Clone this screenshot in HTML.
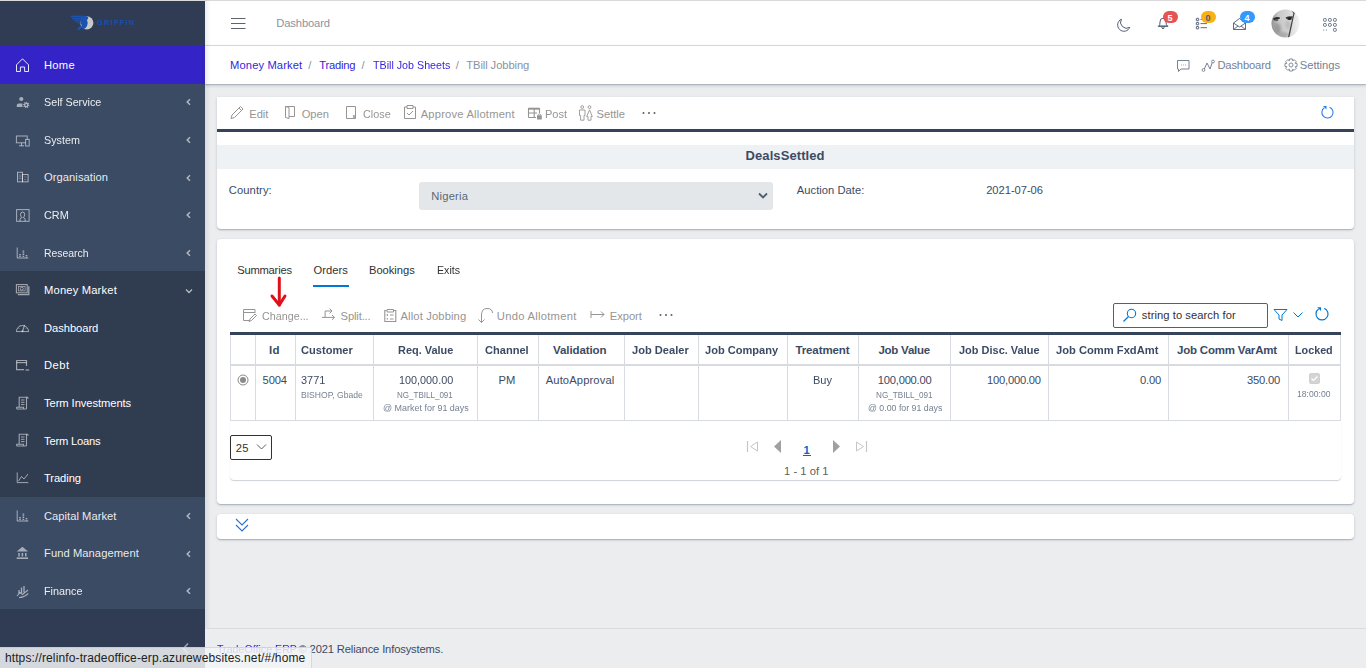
<!DOCTYPE html><html><head><meta charset="utf-8"><style>
html,body{margin:0;padding:0;width:1366px;height:668px;overflow:hidden;background:#ebedef;font-family:"Liberation Sans",sans-serif;position:relative}
.t{position:absolute;white-space:pre;line-height:1}
</style></head><body>
<div style="position:absolute;left:0px;top:0px;width:205px;height:668px;background:#3c4b64"></div>
<div style="position:absolute;left:0px;top:0px;width:205px;height:46px;background:#303c54"></div>
<div style="position:absolute;left:0px;top:46px;width:205px;height:37.6px;background:#3423c6"></div>
<div style="position:absolute;left:0px;top:270.8px;width:205px;height:226.0px;background:#303c50"></div>
<div style="position:absolute;left:0px;top:609px;width:205px;height:59px;background:#303c54"></div>
<svg style="position:absolute;left:68px;top:14px;" width="70" height="18" viewBox="0 0 70 18" fill="none">
<circle cx="18.8" cy="8.8" r="6.6" fill="#c9c9c9"/>
<path d="M2.2 1.8 H15 V3.2 H3.2 Z M4 4 H15 V5.4 H5 Z M6 6.2 H14.5 V7.6 H7 Z M8.5 8.4 H14 V9.6 H9.5 Z" fill="#1d53b0"/>
<path d="M13 2.5 Q16 1.5 19 2.2 Q21 3.2 20 5 Q18.5 5.2 19.2 7 Q20.5 9 19 12 Q17.5 15 15 15.5 Q13 14 13.5 11 Q12 8 13 2.5 Z" fill="#1d53b0"/>
<path d="M9 15.8 Q10 13 12.5 12 L14 13.5 Q12 15 11.5 16 Z" fill="#1d53b0"/>
<text x="29" y="11.4" font-family="Liberation Sans" font-weight="700" font-size="7.4" letter-spacing="1.25" fill="#1a4fa8">GRIFFIN</text>
</svg>
<svg style="position:absolute;left:185px;top:98px;" width="7" height="8" viewBox="0 0 7 8" fill="none"><path d="M5 1.2 L2.2 4 L5 6.8" stroke="rgba(255,255,255,.6)" stroke-width="1.5"/></svg>
<svg style="position:absolute;left:185px;top:136px;" width="7" height="8" viewBox="0 0 7 8" fill="none"><path d="M5 1.2 L2.2 4 L5 6.8" stroke="rgba(255,255,255,.6)" stroke-width="1.5"/></svg>
<svg style="position:absolute;left:185px;top:174px;" width="7" height="8" viewBox="0 0 7 8" fill="none"><path d="M5 1.2 L2.2 4 L5 6.8" stroke="rgba(255,255,255,.6)" stroke-width="1.5"/></svg>
<svg style="position:absolute;left:185px;top:211px;" width="7" height="8" viewBox="0 0 7 8" fill="none"><path d="M5 1.2 L2.2 4 L5 6.8" stroke="rgba(255,255,255,.6)" stroke-width="1.5"/></svg>
<svg style="position:absolute;left:185px;top:249px;" width="7" height="8" viewBox="0 0 7 8" fill="none"><path d="M5 1.2 L2.2 4 L5 6.8" stroke="rgba(255,255,255,.6)" stroke-width="1.5"/></svg>
<svg style="position:absolute;left:185px;top:288px;" width="8" height="6" viewBox="0 0 8 6" fill="none"><path d="M1 1.5 L4 4.5 L7 1.5" stroke="rgba(255,255,255,.65)" stroke-width="1.3"/></svg>
<svg style="position:absolute;left:185px;top:512px;" width="7" height="8" viewBox="0 0 7 8" fill="none"><path d="M5 1.2 L2.2 4 L5 6.8" stroke="rgba(255,255,255,.6)" stroke-width="1.5"/></svg>
<svg style="position:absolute;left:185px;top:550px;" width="7" height="8" viewBox="0 0 7 8" fill="none"><path d="M5 1.2 L2.2 4 L5 6.8" stroke="rgba(255,255,255,.6)" stroke-width="1.5"/></svg>
<svg style="position:absolute;left:185px;top:587px;" width="7" height="8" viewBox="0 0 7 8" fill="none"><path d="M5 1.2 L2.2 4 L5 6.8" stroke="rgba(255,255,255,.6)" stroke-width="1.5"/></svg>
<svg style="position:absolute;left:15px;top:57px;" width="15" height="16" viewBox="0 0 15 16" fill="none"><path d="M1.5 7.8 L7.5 1.8 L13.5 7.8 V14.5 H9.6 V10 H5.4 V14.5 H1.5 Z" stroke="#fff" stroke-width="0.9" stroke-linejoin="round"/></svg>
<svg style="position:absolute;left:15px;top:95px;" width="15" height="15" viewBox="0 0 15 15" fill="none"><circle cx="6.3" cy="4" r="2.1" fill="rgba(255,255,255,.55)"/><path d="M1.8 12 V10 Q1.8 8.5 3.5 8.5 H7.4 V12 Z" fill="rgba(255,255,255,.55)"/><circle cx="11.2" cy="10" r="1.6" stroke="rgba(255,255,255,.55)" stroke-width="1.4"/><circle cx="11.2" cy="10" r="2.6" stroke="rgba(255,255,255,.55)" stroke-width="1.1" stroke-dasharray="1.1 0.9"/></svg>
<svg style="position:absolute;left:15px;top:132px;" width="15" height="15" viewBox="0 0 15 15" fill="none"><rect x="1.4" y="4" width="10.8" height="6.8" stroke="rgba(255,255,255,.55)" stroke-width="1"/><path d="M4 13.8 H9 M6.5 11 V13.8" stroke="rgba(255,255,255,.55)" stroke-width="1"/><rect x="10.6" y="7.4" width="3.6" height="6.6" fill="#3c4b64" stroke="rgba(255,255,255,.55)" stroke-width="1"/></svg>
<svg style="position:absolute;left:15px;top:170px;" width="15" height="15" viewBox="0 0 15 15" fill="none"><rect x="2.5" y="2.3" width="5" height="9.5" stroke="rgba(255,255,255,.55)" stroke-width="1"/><rect x="7.5" y="4.5" width="5.6" height="7.3" stroke="rgba(255,255,255,.55)" stroke-width="1"/><path d="M4.2 4.5 V10 M5.8 4.5 V10 M9.5 7 H11.5 M9.5 9.5 H11.5" stroke="rgba(255,255,255,.55)" stroke-width="0.8" stroke-dasharray="1 0.8"/></svg>
<svg style="position:absolute;left:15px;top:208px;" width="15" height="15" viewBox="0 0 15 15" fill="none"><rect x="1.6" y="1.6" width="12.5" height="11.7" stroke="rgba(255,255,255,.55)" stroke-width="1"/><path d="M5 13.3 V11.8 Q5 10 7 9.5 Q5.5 8.5 5.5 6.5 Q5.5 4 7.6 4 Q9.7 4 9.7 6.5 Q9.7 8.5 8.2 9.5 Q10.2 10 10.2 11.8 V13.3" stroke="rgba(255,255,255,.55)" stroke-width="1"/></svg>
<svg style="position:absolute;left:15px;top:245px;" width="15" height="15" viewBox="0 0 15 15" fill="none"><path d="M2.2 2.5 V13 H13.3" stroke="rgba(255,255,255,.55)" stroke-width="1"/><path d="M5 9 V12.5 M8.4 5.5 V12.5 M11.5 10 V12.5" stroke="rgba(255,255,255,.55)" stroke-width="1.6" stroke-dasharray="1.2 0.6"/></svg>
<svg style="position:absolute;left:15px;top:283px;" width="15" height="15" viewBox="0 0 15 15" fill="none"><rect x="1.4" y="1.6" width="10.8" height="8.2" stroke="rgba(255,255,255,.55)" stroke-width="1.1"/><rect x="3.5" y="3.5" width="6.6" height="4.4" stroke="rgba(255,255,255,.55)" stroke-width="0.8"/><circle cx="6.8" cy="5.7" r="1.5" stroke="rgba(255,255,255,.55)" stroke-width="0.9"/><path d="M2.8 11.6 H13.8 V3.2" stroke="rgba(255,255,255,.55)" stroke-width="1.3"/></svg>
<svg style="position:absolute;left:15px;top:320px;" width="15" height="15" viewBox="0 0 15 15" fill="none"><path d="M1.4 11.6 A6.1 6.1 0 1 1 13.6 11.6 Z" stroke="rgba(255,255,255,.55)" stroke-width="1"/><path d="M7.5 11.2 L9.6 5" stroke="rgba(255,255,255,.55)" stroke-width="1.1"/><circle cx="7.5" cy="11.2" r="1" fill="rgba(255,255,255,.55)"/><path d="M3.6 8.5 H4.4 M5 5.5 L5.5 6 M10.6 8.5 H11.4" stroke="rgba(255,255,255,.55)" stroke-width="0.8"/></svg>
<svg style="position:absolute;left:15px;top:358px;" width="15" height="15" viewBox="0 0 15 15" fill="none"><path d="M11.5 8 V2.8 Q11.5 2.5 11 2.5 H1.8 Q1.6 2.5 1.6 2.8 V11.6 H9" stroke="rgba(255,255,255,.55)" stroke-width="1.2"/><path d="M1.6 4.6 H11.5" stroke="rgba(255,255,255,.55)" stroke-width="1.2"/><path d="M10.5 12 H14.2" stroke="rgba(255,255,255,.55)" stroke-width="1.2"/></svg>
<svg style="position:absolute;left:15px;top:396px;" width="15" height="15" viewBox="0 0 15 15" fill="none"><path d="M4.2 11.2 V1.2 H11.5 V12.2 Q11.5 13 10.6 13 H2 Q1.7 13 1.7 12 V11.2 H8.5 V13" stroke="rgba(255,255,255,.55)" stroke-width="1.1"/><path d="M6 4 H9.5 M6 6.3 H9.5 M6 8.6 H9.5" stroke="rgba(255,255,255,.55)" stroke-width="1"/><path d="M11.5 1.2 H13 V3" stroke="rgba(255,255,255,.55)" stroke-width="0.9"/></svg>
<svg style="position:absolute;left:15px;top:433px;" width="15" height="15" viewBox="0 0 15 15" fill="none"><path d="M4.2 11.2 V1.2 H11.5 V12.2 Q11.5 13 10.6 13 H2 Q1.7 13 1.7 12 V11.2 H8.5 V13" stroke="rgba(255,255,255,.55)" stroke-width="1.1"/><path d="M6 4 H9.5 M6 6.3 H9.5 M6 8.6 H9.5" stroke="rgba(255,255,255,.55)" stroke-width="1"/><path d="M11.5 1.2 H13 V3" stroke="rgba(255,255,255,.55)" stroke-width="0.9"/></svg>
<svg style="position:absolute;left:15px;top:471px;" width="15" height="15" viewBox="0 0 15 15" fill="none"><path d="M2.2 1.5 V11.6 H13.3" stroke="rgba(255,255,255,.55)" stroke-width="1"/><path d="M3.5 10 L6.5 5.5 L9 8 L13 3" stroke="rgba(255,255,255,.55)" stroke-width="1"/></svg>
<svg style="position:absolute;left:15px;top:508px;" width="15" height="15" viewBox="0 0 15 15" fill="none"><path d="M2.2 2.5 V13 H13.3" stroke="rgba(255,255,255,.55)" stroke-width="1"/><path d="M5 9 V12.5 M8.4 5.5 V12.5 M11.5 10 V12.5" stroke="rgba(255,255,255,.55)" stroke-width="1.6" stroke-dasharray="1.2 0.6"/></svg>
<svg style="position:absolute;left:15px;top:546px;" width="15" height="15" viewBox="0 0 15 15" fill="none"><path d="M1.7 5.6 L7.4 0.8 L13.1 5.6 Z" fill="rgba(255,255,255,.55)"/><path d="M4 7 V10.4 M7.4 7 V10.4 M10.8 7 V10.4" stroke="rgba(255,255,255,.55)" stroke-width="1.5"/><path d="M1.7 12.2 H13.1" stroke="rgba(255,255,255,.55)" stroke-width="1.6"/></svg>
<svg style="position:absolute;left:15px;top:584px;" width="15" height="15" viewBox="0 0 15 15" fill="none"><path d="M2 12 L5 8.5 L7.5 10.5 L13 6" stroke="rgba(255,255,255,.55)" stroke-width="1.1"/><path d="M6.5 3.5 V9 M9 2 V8.5 M4 6 V9.5" stroke="rgba(255,255,255,.55)" stroke-width="1.3"/><path d="M4 13.5 Q9 13.5 13.3 9.5" stroke="rgba(255,255,255,.55)" stroke-width="1.1"/></svg>
<svg style="position:absolute;left:180px;top:642px;" width="11" height="14" viewBox="0 0 11 14" fill="none"><path d="M8 1.5 L3.5 6.5 L8 11.5" stroke="rgba(255,255,255,.5)" stroke-width="1.6"/></svg>
<div style="position:absolute;left:205px;top:0px;width:1161px;height:45px;background:#fff"></div>
<div style="position:absolute;left:205px;top:45px;width:1161px;height:1px;background:#d8dbe0"></div>
<div style="position:absolute;left:205px;top:46px;width:1161px;height:38px;background:#fff;box-shadow:0 1px 0 0 rgba(60,75,100,.2),0 2px 2px 0 rgba(60,75,100,.12),0 1px 4px 0 rgba(60,75,100,.12)"></div>
<div style="position:absolute;left:0px;top:0px;width:1366px;height:1px;background:#d9d9d9"></div>
<svg style="position:absolute;left:231px;top:17px;" width="15" height="13" viewBox="0 0 15 13" fill="none"><path d="M0 1.5 H14.5 M0 6.5 H14.5 M0 11.5 H14.5" stroke="#5f6370" stroke-width="1.1"/></svg>
<svg style="position:absolute;left:1116px;top:18px;" width="16" height="15" viewBox="0 0 16 15" fill="none"><path d="M5.4 1.2 A6.3 6.3 0 1 0 13.8 9.3 A6 6 0 0 1 5.4 1.2 Z" stroke="#4f5d73" stroke-width="1" stroke-linejoin="round"/></svg>
<svg style="position:absolute;left:1157px;top:17px;" width="13" height="14" viewBox="0 0 13 14" fill="none"><path d="M2 9.2 Q3 8 3 5 Q3 1.2 6 1.2 Q9 1.2 9 5 Q9 8 10.5 9.2 Z" stroke="#4f5d73" stroke-width="1" stroke-linejoin="round"/><path d="M0.8 9.2 H11.2" stroke="#4f5d73" stroke-width="1.1"/><path d="M4.8 9.5 Q4.8 11.8 6 11.8 Q7.2 11.8 7.2 9.5" stroke="#4f5d73" stroke-width="1"/></svg>
<svg style="position:absolute;left:1195px;top:17px;" width="14" height="14" viewBox="0 0 14 14" fill="none"><rect x="1.3" y="1.3" width="2.4" height="2.4" rx="0.5" stroke="#4f5d73" stroke-width="1"/><rect x="1.3" y="5.4" width="2.4" height="2.4" rx="0.5" stroke="#4f5d73" stroke-width="1"/><rect x="1.3" y="9.5" width="2.4" height="2.4" rx="0.5" stroke="#4f5d73" stroke-width="1"/><path d="M5.5 2.5 H12 M5.5 6.6 H12 M5.5 10.7 H12" stroke="#4f5d73" stroke-width="0.9"/></svg>
<svg style="position:absolute;left:1232px;top:16px;" width="15" height="15" viewBox="0 0 15 15" fill="none"><path d="M1.5 7 L7.5 2.5 L13.5 7 V13.5 H1.5 Z M1.5 7 L7.5 11 L13.5 7 M1.5 13.5 L6 10 M13.5 13.5 L9 10" stroke="#4f5d73" stroke-width="0.9"/></svg>
<div style="position:absolute;left:1163px;top:11px;width:15px;height:12px;background:#e55353;border-radius:6px"></div>
<div style="position:absolute;left:1201px;top:11px;width:15px;height:12px;background:#f9b115;border-radius:6px"></div>
<div style="position:absolute;left:1240px;top:11px;width:15px;height:12px;background:#39f;border-radius:6px"></div>
<svg style="position:absolute;left:1271px;top:9px;" width="29" height="29" viewBox="0 0 29 29" fill="none"><defs><clipPath id="avc"><circle cx="14.5" cy="14.5" r="14"/></clipPath><filter id="avb"><feGaussianBlur stdDeviation="0.6"/></filter><filter id="avb2"><feGaussianBlur stdDeviation="1.6"/></filter>
<linearGradient id="avg" x1="0" y1="0" x2="1" y2="0"><stop offset="0" stop-color="#8c8c8c"/><stop offset=".25" stop-color="#c8c8c8"/><stop offset=".55" stop-color="#d4d4d4"/><stop offset=".75" stop-color="#e2e2e2"/><stop offset="1" stop-color="#f4f4f4"/></linearGradient></defs>
<g clip-path="url(#avc)"><rect width="29" height="29" fill="url(#avg)"/>
<g filter="url(#avb2)"><ellipse cx="6" cy="20" rx="4" ry="6" fill="#9a9a9a"/><ellipse cx="12" cy="26" rx="6" ry="3" fill="#a8a8a8"/><ellipse cx="17" cy="16" rx="3" ry="5" fill="#bcbcbc"/></g>
<g filter="url(#avb)"><path d="M2 9.5 Q5 7 9 8.5 L8.5 10 Q5 9.5 3 11.5 Z" fill="#2a2a2a"/><ellipse cx="5.5" cy="11" rx="2" ry="1.1" fill="#555"/><path d="M14.5 8.5 Q18 6.5 22 7.5 L21.5 9 Q18 8.5 15.5 10 Z" fill="#3a3a3a"/><ellipse cx="18.5" cy="9.8" rx="2.3" ry="1.2" fill="#1e1e1e"/>
<path d="M22.8 2.5 L23.8 3 L18.2 29 L16.8 29 Z" fill="#444"/><path d="M20 1 Q23 0 25 3 L23 5 Z" fill="#555"/></g></g></svg>
<svg style="position:absolute;left:1322px;top:17px;" width="16" height="16" viewBox="0 0 16 16" fill="none"><rect x="1.5" y="1.5" width="2.8" height="2.8" rx="0.9" stroke="#4f5d73" stroke-width="0.9"/><rect x="6.5" y="1.5" width="2.8" height="2.8" rx="0.9" stroke="#4f5d73" stroke-width="0.9"/><rect x="11.5" y="1.5" width="2.8" height="2.8" rx="0.9" stroke="#4f5d73" stroke-width="0.9"/><rect x="1.5" y="6.5" width="2.8" height="2.8" rx="0.9" stroke="#4f5d73" stroke-width="0.9"/><rect x="6.5" y="6.5" width="2.8" height="2.8" rx="0.9" stroke="#4f5d73" stroke-width="0.9"/><rect x="11.5" y="6.5" width="2.8" height="2.8" rx="0.9" stroke="#4f5d73" stroke-width="0.9"/><rect x="1.3" y="12.6" width="0.9" height="0.9" fill="#4f5d73"/><rect x="3.9000000000000004" y="12.6" width="0.9" height="0.9" fill="#4f5d73"/><rect x="11.5" y="11.5" width="2.8" height="2.8" rx="0.9" stroke="#4f5d73" stroke-width="0.9"/></svg>
<svg style="position:absolute;left:1176px;top:59px;" width="15" height="14" viewBox="0 0 15 14" fill="none"><path d="M1.5 1.5 H13 V10 H5 L2.5 12.5 V10 H1.5 Z" stroke="#768192" stroke-width="1"/><path d="M5 6 H5.8 M7 6 H7.8 M9 6 H9.8" stroke="#768192" stroke-width="0.8"/></svg>
<svg style="position:absolute;left:1201px;top:59px;" width="15" height="14" viewBox="0 0 15 14" fill="none"><circle cx="2.5" cy="11" r="1.4" stroke="#768192" stroke-width="0.9"/><circle cx="12" cy="2.5" r="1.4" stroke="#768192" stroke-width="0.9"/><path d="M3.3 10 L6 4 L9 10 L11.3 3.5" stroke="#768192" stroke-width="1"/></svg>
<svg style="position:absolute;left:1284px;top:58px;" width="14" height="14" viewBox="0 0 14 14" fill="none"><path d="M13.05 5.65 L13.05 8.35 L11.20 8.88 L11.30 8.64 L12.24 10.32 L10.32 12.24 L8.64 11.30 L8.88 11.20 L8.35 13.05 L5.65 13.05 L5.12 11.20 L5.36 11.30 L3.68 12.24 L1.76 10.32 L2.70 8.64 L2.80 8.88 L0.95 8.35 L0.95 5.65 L2.80 5.12 L2.70 5.36 L1.76 3.68 L3.68 1.76 L5.36 2.70 L5.12 2.80 L5.65 0.95 L8.35 0.95 L8.88 2.80 L8.64 2.70 L10.32 1.76 L12.24 3.68 L11.30 5.36 L11.20 5.12 Z" stroke="#768192" stroke-width="0.9" stroke-linejoin="round"/><circle cx="7" cy="7" r="2" stroke="#768192" stroke-width="0.9"/></svg>
<div style="position:absolute;left:217px;top:97px;width:1137px;height:132px;background:#fff;border-radius:4px;box-shadow:0 1px 1px 0 rgba(60,75,100,.14),0 2px 1px -1px rgba(60,75,100,.12),0 1px 3px 0 rgba(60,75,100,.2);border-radius:0 0 4px 4px"></div>
<div style="position:absolute;left:217px;top:129px;width:1137px;height:3px;background:#35435b"></div>
<div style="position:absolute;left:217px;top:145px;width:1137px;height:24px;background:#eef2f5"></div>
<div style="position:absolute;left:419px;top:182px;width:354px;height:28px;background:#e4e7ea;border-radius:3px"></div>
<svg style="position:absolute;left:757px;top:191px;" width="12" height="10" viewBox="0 0 12 10" fill="none"><path d="M2 2.5 L6 6.5 L10 2.5" stroke="#4f5d73" stroke-width="1.8"/></svg>
<svg style="position:absolute;left:229px;top:105px;" width="16" height="15" viewBox="0 0 16 15" fill="none"><path d="M2 13.5 L3 10 L11.5 1.5 L14 4 L5.5 12.5 Z M10 3 L12.5 5.5" stroke="#979593" stroke-width="1"/></svg>
<svg style="position:absolute;left:284px;top:105px;" width="12" height="15" viewBox="0 0 12 15" fill="none"><path d="M1.5 1.5 L5 2.5 V13.5 L1.5 12.5 Z M1.5 1.5 H10.5 V11.5 H5" stroke="#979593" stroke-width="1"/></svg>
<svg style="position:absolute;left:345px;top:105px;" width="13" height="15" viewBox="0 0 13 15" fill="none"><path d="M1.5 1.5 H10.5 V13.5 H1.5 Z" stroke="#979593" stroke-width="1"/><path d="M9 10 V13" stroke="#979593" stroke-width="1.5"/></svg>
<svg style="position:absolute;left:403px;top:104px;" width="14" height="16" viewBox="0 0 14 16" fill="none"><path d="M4 3 H1.5 V14.5 H12.5 V3 H10 M4 1.5 H10 V4.5 H4 Z M4 9 L6 11 L10 7" stroke="#979593" stroke-width="1"/></svg>
<svg style="position:absolute;left:527px;top:105px;" width="16" height="16" viewBox="0 0 16 16" fill="none"><path d="M1.5 12.5 V3.5 H12.5 V8 M1.5 12.5 H9 M1.5 8 H10 M7.2 3.5 V12.5" stroke="#979593" stroke-width="1.1"/><path d="M1.5 3.7 H12.5" stroke="#979593" stroke-width="2"/><rect x="10" y="10.3" width="4.8" height="4.2" rx="0.6" fill="#979593"/><path d="M11 10.5 V9.6 Q12.4 8 13.8 9.6 V10.5" stroke="#979593" stroke-width="0.9"/></svg>
<svg style="position:absolute;left:578px;top:104px;" width="16" height="18" viewBox="0 0 16 18" fill="none"><circle cx="4.2" cy="3.1" r="1.4" stroke="#979593" stroke-width="0.9"/><circle cx="11.5" cy="3.1" r="1.4" stroke="#979593" stroke-width="0.9"/><path d="M1.5 11.5 V6 H7 V11.5 H6 V16.2 H2.6 V11.5 Z" stroke="#979593" stroke-width="0.9" stroke-linejoin="round"/><path d="M11.5 5.8 L14.3 12.5 H13 V16.2 H10 V12.5 H8.7 Z" stroke="#979593" stroke-width="0.9" stroke-linejoin="round"/></svg>
<svg style="position:absolute;left:642px;top:111px;" width="15" height="4" viewBox="0 0 15 4" fill="none"><circle cx="1.5" cy="2" r="1" fill="#605e5c"/><circle cx="7" cy="2" r="1" fill="#605e5c"/><circle cx="12.5" cy="2" r="1" fill="#605e5c"/></svg>
<svg style="position:absolute;left:1320px;top:105px;" width="15" height="15" viewBox="0 0 15 15" fill="none"><path d="M4.3 2.8 A5.6 5.6 0 1 0 9.5 2.2" stroke="#2b7de9" stroke-width="1.1"/><path d="M3 1 H6.5 V4.5 Z" fill="#2b7de9"/></svg>
<div style="position:absolute;left:217px;top:239px;width:1137px;height:265px;background:#fff;border-radius:4px;box-shadow:0 1px 1px 0 rgba(60,75,100,.14),0 2px 1px -1px rgba(60,75,100,.12),0 1px 3px 0 rgba(60,75,100,.2)"></div>
<div style="position:absolute;left:313px;top:285px;width:36px;height:2px;background:#0078d4"></div>
<svg style="position:absolute;left:242px;top:308px;" width="16" height="15" viewBox="0 0 16 15" fill="none"><path d="M8 12.5 H1.5 V1.5 H13 V5 M1.5 4.5 H13" stroke="#979593" stroke-width="1"/><path d="M7 13.5 L8 11 L13 6 L14.5 7.5 L9.5 12.5 Z" stroke="#979593" stroke-width="1"/></svg>
<svg style="position:absolute;left:321px;top:306px;" width="16" height="14" viewBox="0 0 16 14" fill="none"><path d="M1 11.4 H13.5 M11 9 L13.5 11.4 L11 13.8 M4.1 11.4 V5 H11 M8.6 2.6 L11 5 L8.6 7.4" stroke="#979593" stroke-width="1"/></svg>
<svg style="position:absolute;left:383px;top:308px;" width="15" height="15" viewBox="0 0 15 15" fill="none"><path d="M3.5 2.5 H1.8 V13.5 H12.8 V2.5 H11" stroke="#979593" stroke-width="1.1"/><path d="M4 1.5 H10.5 V4 H4 Z" stroke="#979593" stroke-width="1"/><path d="M4.3 6 V8 M4.3 10 V11.5 M7 7 H10.5 M7 11 H10.5" stroke="#979593" stroke-width="1.1"/></svg>
<svg style="position:absolute;left:477px;top:307px;" width="18" height="17" viewBox="0 0 18 17" fill="none"><path d="M4.5 15.5 V8 Q4.5 1.5 10 1.5 Q15.5 1.5 15.5 6 M1.5 12.5 L4.5 15.5 L7.5 12.5" stroke="#979593" stroke-width="1"/></svg>
<svg style="position:absolute;left:590px;top:310px;" width="16" height="9" viewBox="0 0 16 9" fill="none"><path d="M1 1 V8 M1 4.5 H14 M11 1.5 L14 4.5 L11 7.5" stroke="#979593" stroke-width="1"/></svg>
<svg style="position:absolute;left:659px;top:313px;" width="15" height="4" viewBox="0 0 15 4" fill="none"><circle cx="1.5" cy="2" r="1" fill="#605e5c"/><circle cx="7" cy="2" r="1" fill="#605e5c"/><circle cx="12.5" cy="2" r="1" fill="#605e5c"/></svg>
<div style="position:absolute;left:1113px;top:303px;width:155px;height:25px;box-sizing:border-box;border:1px solid #605e5c;border-radius:2px;background:#fff"></div>
<svg style="position:absolute;left:1122px;top:308px;" width="16" height="15" viewBox="0 0 16 15" fill="none"><circle cx="9.5" cy="5.5" r="4.2" stroke="#0078d4" stroke-width="1.1"/><path d="M6.5 8.5 L1.5 13.5" stroke="#0078d4" stroke-width="1.2"/></svg>
<svg style="position:absolute;left:1273px;top:308px;" width="15" height="14" viewBox="0 0 15 14" fill="none"><path d="M1 1.5 H14 L9 7 V12.5 L6 11 V7 Z" stroke="#0078d4" stroke-width="1"/></svg>
<svg style="position:absolute;left:1292px;top:311px;" width="12" height="8" viewBox="0 0 12 8" fill="none"><path d="M1.5 1.5 L6 6 L10.5 1.5" stroke="#0078d4" stroke-width="1"/></svg>
<svg style="position:absolute;left:1314px;top:306px;" width="16" height="16" viewBox="0 0 16 16" fill="none"><path d="M4.6 3 A6 6 0 1 0 10.3 2.4" stroke="#0078d4" stroke-width="1.2"/><path d="M3.2 1.2 H7 V5 Z" fill="#0078d4"/></svg>
<div style="position:absolute;left:230px;top:332px;width:1111px;height:3px;background:#35435b"></div>
<div style="position:absolute;left:230px;top:335px;width:1111px;height:86px;box-sizing:border-box;border:1px solid #d8dbe0;border-top:0;background:#fff"></div>
<div style="position:absolute;left:230px;top:364px;width:1111px;height:2px;background:#d8dbe0"></div>
<div style="position:absolute;left:255px;top:335px;width:1px;height:86px;background:#d8dbe0"></div>
<div style="position:absolute;left:295px;top:335px;width:1px;height:86px;background:#d8dbe0"></div>
<div style="position:absolute;left:373px;top:335px;width:1px;height:86px;background:#d8dbe0"></div>
<div style="position:absolute;left:477px;top:335px;width:1px;height:86px;background:#d8dbe0"></div>
<div style="position:absolute;left:538px;top:335px;width:1px;height:86px;background:#d8dbe0"></div>
<div style="position:absolute;left:624px;top:335px;width:1px;height:86px;background:#d8dbe0"></div>
<div style="position:absolute;left:698px;top:335px;width:1px;height:86px;background:#d8dbe0"></div>
<div style="position:absolute;left:787px;top:335px;width:1px;height:86px;background:#d8dbe0"></div>
<div style="position:absolute;left:858px;top:335px;width:1px;height:86px;background:#d8dbe0"></div>
<div style="position:absolute;left:950px;top:335px;width:1px;height:86px;background:#d8dbe0"></div>
<div style="position:absolute;left:1048px;top:335px;width:1px;height:86px;background:#d8dbe0"></div>
<div style="position:absolute;left:1168px;top:335px;width:1px;height:86px;background:#d8dbe0"></div>
<div style="position:absolute;left:1288px;top:335px;width:1px;height:86px;background:#d8dbe0"></div>
<svg style="position:absolute;left:1309px;top:373px;" width="11" height="11" viewBox="0 0 11 11" fill="none"><rect x="0.5" y="0.5" width="10" height="10" rx="1.5" fill="#d4d4d4" stroke="#cfcfcf"/><path d="M2.5 5.5 L4.5 7.5 L8.5 3.5" stroke="#fff" stroke-width="1.2"/></svg>
<svg style="position:absolute;left:237px;top:374px;" width="12" height="12" viewBox="0 0 12 12" fill="none"><circle cx="6" cy="6" r="5" fill="#fff" stroke="#8a8a8a" stroke-width="1"/><circle cx="6" cy="6" r="3" fill="#8a8a8a"/></svg>
<div style="position:absolute;left:230px;top:421px;width:1111px;height:59px;background:#fff;border-radius:0 0 4px 4px;box-shadow:0 1px 1px rgba(60,75,100,.25)"></div>
<div style="position:absolute;left:230px;top:435px;width:42px;height:25px;box-sizing:border-box;border:1px solid #323130;border-radius:2px;background:#fff"></div>
<svg style="position:absolute;left:256px;top:443px;" width="12" height="8" viewBox="0 0 12 8" fill="none"><path d="M1 1.5 L5.5 6 L10 1.5" stroke="#605e5c" stroke-width="1"/></svg>
<svg style="position:absolute;left:746px;top:440px;" width="13" height="13" viewBox="0 0 13 13" fill="none"><path d="M1.5 1 V12" stroke="#c8c6c4" stroke-width="1.2"/><path d="M11.5 2 L4.5 6.5 L11.5 11 Z" stroke="#c8c6c4" stroke-width="1"/></svg>
<svg style="position:absolute;left:773px;top:439px;" width="9" height="15" viewBox="0 0 9 15" fill="none"><path d="M8 1 L1 7.5 L8 14 Z" fill="#a0a0a0"/></svg>
<div style="position:absolute;left:803px;top:455px;width:8px;height:1px;background:#0066cc"></div>
<svg style="position:absolute;left:832px;top:439px;" width="9" height="15" viewBox="0 0 9 15" fill="none"><path d="M1 1 L8 7.5 L1 14 Z" fill="#a0a0a0"/></svg>
<svg style="position:absolute;left:855px;top:440px;" width="13" height="13" viewBox="0 0 13 13" fill="none"><path d="M11.5 1 V12" stroke="#c8c6c4" stroke-width="1.2"/><path d="M1.5 2 L8.5 6.5 L1.5 11 Z" stroke="#c8c6c4" stroke-width="1"/></svg>
<svg style="position:absolute;left:268px;top:275px;" width="20" height="34" viewBox="0 0 20 34" fill="none"><path d="M11.3 3 V30" stroke="#e0101a" stroke-width="3" stroke-linecap="round"/><path d="M4 21 L11.3 30 L17 21" stroke="#e0101a" stroke-width="3" stroke-linecap="round" stroke-linejoin="round"/></svg>
<div style="position:absolute;left:217px;top:514px;width:1137px;height:25px;background:#fff;border-radius:4px;box-shadow:0 1px 1px 0 rgba(60,75,100,.14),0 2px 1px -1px rgba(60,75,100,.12),0 1px 3px 0 rgba(60,75,100,.2)"></div>
<svg style="position:absolute;left:234px;top:517px;" width="16" height="16" viewBox="0 0 16 16" fill="none"><path d="M2 2 L8 8 L14 2 M2 8 L8 14 L14 8" stroke="#2b6fd6" stroke-width="1.1"/></svg>
<div style="position:absolute;left:205px;top:628px;width:1161px;height:1px;background:#d8dbe0"></div>
<div class="t" id="t0" style="left:44.0px;top:60px;font-size:11.2px;color:#ffffff;letter-spacing:0.252px;">Home</div>
<div class="t" id="t1" style="left:44.0px;top:97px;font-size:11.2px;color:rgba(255,255,255,.9);transform:scaleX(0.9597);transform-origin:0 0;">Self Service</div>
<div class="t" id="t2" style="left:44.0px;top:135px;font-size:11.2px;color:rgba(255,255,255,.9);transform:scaleX(0.9621);transform-origin:0 0;">System</div>
<div class="t" id="t3" style="left:44.0px;top:172px;font-size:11.2px;color:rgba(255,255,255,.9);letter-spacing:0.051px;">Organisation</div>
<div class="t" id="t4" style="left:44.0px;top:210px;font-size:11.2px;color:rgba(255,255,255,.9);transform:scaleX(0.9731);transform-origin:0 0;">CRM</div>
<div class="t" id="t5" style="left:44.0px;top:248px;font-size:11.2px;color:rgba(255,255,255,.9);transform:scaleX(0.9313);transform-origin:0 0;">Research</div>
<div class="t" id="t6" style="left:44.0px;top:285px;font-size:11.2px;color:#ffffff;letter-spacing:0.174px;">Money Market</div>
<div class="t" id="t7" style="left:44.0px;top:323px;font-size:11.2px;color:#ffffff;letter-spacing:-0.054px;">Dashboard</div>
<div class="t" id="t8" style="left:44.0px;top:360px;font-size:11.2px;color:#ffffff;letter-spacing:0.453px;">Debt</div>
<div class="t" id="t9" style="left:44.0px;top:398px;font-size:11.2px;color:#ffffff;letter-spacing:-0.072px;">Term Investments</div>
<div class="t" id="t10" style="left:44.0px;top:436px;font-size:11.2px;color:#ffffff;letter-spacing:-0.206px;">Term Loans</div>
<div class="t" id="t11" style="left:44.0px;top:473px;font-size:11.2px;color:#ffffff;letter-spacing:-0.089px;">Trading</div>
<div class="t" id="t12" style="left:44.0px;top:511px;font-size:11.2px;color:rgba(255,255,255,.9);letter-spacing:0.021px;">Capital Market</div>
<div class="t" id="t13" style="left:44.0px;top:548px;font-size:11.2px;color:rgba(255,255,255,.9);letter-spacing:0.063px;">Fund Management</div>
<div class="t" id="t14" style="left:44.0px;top:586px;font-size:11.2px;color:rgba(255,255,255,.9);transform:scaleX(0.9645);transform-origin:0 0;">Finance</div>
<div class="t" id="t15" style="left:276.3px;top:18px;font-size:11.2px;color:#8a93a2;letter-spacing:-0.129px;">Dashboard</div>
<div class="t" id="t16" style="left:1167.5px;top:14px;font-size:9px;color:#fff;font-weight:700;">5</div>
<div class="t" id="t17" style="left:1205.5px;top:14px;font-size:9px;color:#4f5d73;font-weight:700;">0</div>
<div class="t" id="t18" style="left:1244.5px;top:14px;font-size:9px;color:#fff;font-weight:700;">4</div>
<div class="t" id="t19" style="left:230.1px;top:60px;font-size:11.2px;color:#321fdb;letter-spacing:0.101px;">Money Market</div>
<div class="t" id="t20" style="left:308.3px;top:60px;font-size:11.2px;color:#8a93a2;">/</div>
<div class="t" id="t21" style="left:319.2px;top:60px;font-size:11.2px;color:#321fdb;letter-spacing:-0.222px;">Trading</div>
<div class="t" id="t22" style="left:361.6px;top:60px;font-size:11.2px;color:#8a93a2;">/</div>
<div class="t" id="t23" style="left:372.8px;top:60px;font-size:11.2px;color:#321fdb;transform:scaleX(0.9562);transform-origin:0 0;">TBill Job Sheets</div>
<div class="t" id="t24" style="left:455.8px;top:60px;font-size:11.2px;color:#8a93a2;">/</div>
<div class="t" id="t25" style="left:466.3px;top:60px;font-size:11.2px;color:#8a93a2;letter-spacing:-0.089px;">TBill Jobbing</div>
<div class="t" id="t26" style="left:1217.4px;top:60px;font-size:11.2px;color:#768192;letter-spacing:-0.142px;">Dashboard</div>
<div class="t" id="t27" style="left:1299.7px;top:60px;font-size:11.2px;color:#768192;letter-spacing:0.009px;">Settings</div>
<div class="t" id="t28" style="left:745.6px;top:149px;font-size:13px;color:#3c4b64;font-weight:700;letter-spacing:0.078px;">DealsSettled</div>
<div class="t" id="t29" style="left:228.8px;top:185px;font-size:11.2px;color:#3c4b64;letter-spacing:0.088px;">Country:</div>
<div class="t" id="t30" style="left:431.3px;top:191px;font-size:11.2px;color:#5c6873;letter-spacing:0.191px;">Nigeria</div>
<div class="t" id="t31" style="left:796.8px;top:185px;font-size:11.2px;color:#3c4b64;letter-spacing:0.027px;">Auction Date:</div>
<div class="t" id="t32" style="left:986.2px;top:185px;font-size:11.2px;color:#3c4b64;letter-spacing:-0.048px;">2021-07-06</div>
<div class="t" id="t33" style="left:249.3px;top:109px;font-size:11.2px;color:#979593;letter-spacing:-0.060px;">Edit</div>
<div class="t" id="t34" style="left:301.7px;top:109px;font-size:11.2px;color:#979593;letter-spacing:-0.025px;">Open</div>
<div class="t" id="t35" style="left:362.7px;top:109px;font-size:11.2px;color:#979593;transform:scaleX(0.9682);transform-origin:0 0;">Close</div>
<div class="t" id="t36" style="left:420.7px;top:109px;font-size:11.2px;color:#979593;letter-spacing:0.194px;">Approve Allotment</div>
<div class="t" id="t37" style="left:545.0px;top:109px;font-size:11.2px;color:#979593;transform:scaleX(0.9870);transform-origin:0 0;">Post</div>
<div class="t" id="t38" style="left:596.6px;top:109px;font-size:11.2px;color:#979593;letter-spacing:-0.042px;">Settle</div>
<div class="t" id="t39" style="left:237.2px;top:265px;font-size:11.2px;color:#323130;letter-spacing:-0.222px;">Summaries</div>
<div class="t" id="t40" style="left:313.4px;top:265px;font-size:11.2px;color:#323130;letter-spacing:0.039px;">Orders</div>
<div class="t" id="t41" style="left:369.0px;top:265px;font-size:11.2px;color:#323130;letter-spacing:-0.033px;">Bookings</div>
<div class="t" id="t42" style="left:436.7px;top:265px;font-size:11.2px;color:#323130;transform:scaleX(0.9485);transform-origin:0 0;">Exits</div>
<div class="t" id="t43" style="left:261.6px;top:311px;font-size:11.2px;color:#979593;transform:scaleX(0.9605);transform-origin:0 0;">Change...</div>
<div class="t" id="t44" style="left:340.6px;top:311px;font-size:11.2px;color:#979593;letter-spacing:-0.142px;">Split...</div>
<div class="t" id="t45" style="left:400.5px;top:311px;font-size:11.2px;color:#979593;letter-spacing:0.136px;">Allot Jobbing</div>
<div class="t" id="t46" style="left:496.8px;top:311px;font-size:11.2px;color:#979593;letter-spacing:0.279px;">Undo Allotment</div>
<div class="t" id="t47" style="left:609.8px;top:311px;font-size:11.2px;color:#979593;letter-spacing:-0.049px;">Export</div>
<div class="t" id="t48" style="left:1141.8px;top:310px;font-size:11.2px;color:#323130;letter-spacing:0.065px;">string to search for</div>
<div class="t" id="t49" style="left:269.0px;top:345px;font-size:11.5px;color:#3c4b64;font-weight:700;letter-spacing:0.366px;">Id</div>
<div class="t" id="t50" style="left:301.3px;top:345px;font-size:11.5px;color:#3c4b64;font-weight:700;transform:scaleX(0.9648);transform-origin:0 0;">Customer</div>
<div class="t" id="t51" style="left:397.8px;top:345px;font-size:11.5px;color:#3c4b64;font-weight:700;transform:scaleX(0.9506);transform-origin:0 0;">Req. Value</div>
<div class="t" id="t52" style="left:485.1px;top:345px;font-size:11.5px;color:#3c4b64;font-weight:700;transform:scaleX(0.9631);transform-origin:0 0;">Channel</div>
<div class="t" id="t53" style="left:553.0px;top:345px;font-size:11.5px;color:#3c4b64;font-weight:700;letter-spacing:-0.081px;">Validation</div>
<div class="t" id="t54" style="left:631.8px;top:345px;font-size:11.5px;color:#3c4b64;font-weight:700;transform:scaleX(0.9658);transform-origin:0 0;">Job Dealer</div>
<div class="t" id="t55" style="left:705.3px;top:345px;font-size:11.5px;color:#3c4b64;font-weight:700;transform:scaleX(0.9626);transform-origin:0 0;">Job Company</div>
<div class="t" id="t56" style="left:795.4px;top:345px;font-size:11.5px;color:#3c4b64;font-weight:700;letter-spacing:-0.096px;">Treatment</div>
<div class="t" id="t57" style="left:878.4px;top:345px;font-size:11.5px;color:#3c4b64;font-weight:700;letter-spacing:-0.236px;">Job Value</div>
<div class="t" id="t58" style="left:958.8px;top:345px;font-size:11.5px;color:#3c4b64;font-weight:700;transform:scaleX(0.9541);transform-origin:0 0;">Job Disc. Value</div>
<div class="t" id="t59" style="left:1056.2px;top:345px;font-size:11.5px;color:#3c4b64;font-weight:700;transform:scaleX(0.9713);transform-origin:0 0;">Job Comm FxdAmt</div>
<div class="t" id="t60" style="left:1177.0px;top:345px;font-size:11.5px;color:#3c4b64;font-weight:700;letter-spacing:-0.199px;">Job Comm VarAmt</div>
<div class="t" id="t61" style="left:1294.6px;top:345px;font-size:11.5px;color:#3c4b64;font-weight:700;transform:scaleX(0.9363);transform-origin:0 0;">Locked</div>
<div class="t" id="t62" style="left:262.6px;top:375px;font-size:11.2px;color:#3c4b64;letter-spacing:-0.164px;">5004</div>
<div class="t" id="t63" style="left:301.3px;top:375px;font-size:11.2px;color:#3c4b64;transform:scaleX(0.9803);transform-origin:0 0;">3771</div>
<div class="t" id="t64" style="left:301.3px;top:390px;font-size:9.6px;color:#768192;transform:scaleX(0.8922);transform-origin:0 0;">BISHOP, Gbade</div>
<div class="t" id="t65" style="left:398.5px;top:375px;font-size:11.2px;color:#3c4b64;transform:scaleX(0.9679);transform-origin:0 0;">100,000.00</div>
<div class="t" id="t66" style="left:397.3px;top:390px;font-size:9.6px;color:#768192;transform:scaleX(0.8369);transform-origin:0 0;">NG_TBILL_091</div>
<div class="t" id="t67" style="left:382.8px;top:403px;font-size:9.6px;color:#768192;transform:scaleX(0.9340);transform-origin:0 0;">@ Market for 91 days</div>
<div class="t" id="t68" style="left:498.5px;top:375px;font-size:11.2px;color:#3c4b64;letter-spacing:0.119px;">PM</div>
<div class="t" id="t69" style="left:545.7px;top:375px;font-size:11.2px;color:#3c4b64;letter-spacing:0.130px;">AutoApproval</div>
<div class="t" id="t70" style="left:813.2px;top:375px;font-size:11.2px;color:#3c4b64;transform:scaleX(0.9854);transform-origin:0 0;">Buy</div>
<div class="t" id="t71" style="left:877.8px;top:375px;font-size:11.2px;color:#3c4b64;letter-spacing:-0.233px;">100,000.00</div>
<div class="t" id="t72" style="left:876.2px;top:390px;font-size:9.6px;color:#768192;transform:scaleX(0.8489);transform-origin:0 0;">NG_TBILL_091</div>
<div class="t" id="t73" style="left:867.6px;top:403px;font-size:9.6px;color:#768192;transform:scaleX(0.9160);transform-origin:0 0;">@ 0.00 for 91 days</div>
<div class="t" id="t74" style="left:987.0px;top:375px;font-size:11.2px;color:#3c4b64;letter-spacing:-0.222px;">100,000.00</div>
<div class="t" id="t75" style="left:1139.9px;top:375px;font-size:11.2px;color:#3c4b64;letter-spacing:-0.160px;">0.00</div>
<div class="t" id="t76" style="left:1246.9px;top:375px;font-size:11.2px;color:#3c4b64;letter-spacing:-0.184px;">350.00</div>
<div class="t" id="t77" style="left:1297.0px;top:389px;font-size:9.6px;color:#768192;transform:scaleX(0.8967);transform-origin:0 0;">18:00:00</div>
<div class="t" id="t78" style="left:235.8px;top:443px;font-size:11.2px;color:#323130;letter-spacing:0.147px;">25</div>
<div class="t" id="t79" style="left:803.4px;top:445px;font-size:11.2px;color:#0066cc;font-weight:700;">1</div>
<div class="t" id="t80" style="left:784.0px;top:466px;font-size:11.2px;color:#605e5c;letter-spacing:0.027px;">1 - 1 of 1</div>
<div class="t" id="t81" style="left:216.5px;top:644px;font-size:11.2px;color:#321fdb;transform:scaleX(0.9529);transform-origin:0 0;">TradeOffice ERP</div>
<div class="t" id="t82" style="left:298.5px;top:644px;font-size:11.2px;color:#3c4b64;letter-spacing:-0.147px;">© 2021 Reliance Infosystems.</div>
<div style="position:absolute;left:205px;top:0;width:6px;height:628px;background:linear-gradient(to right,rgba(0,0,21,.07),rgba(0,0,21,0))"></div>
<div style="position:absolute;left:0;top:647px;width:312px;height:21px;background:rgba(242,243,245,.85);border-top:1px solid rgba(190,190,190,.5);border-right:1px solid rgba(190,190,190,.5);box-sizing:border-box;border-top-right-radius:2px"></div>
<div class="t" style="left:4.9px;top:652px;font-size:12px;color:#202124;letter-spacing:0.129px;">https://relinfo-tradeoffice-erp.azurewebsites.net/#/home</div>
</body></html>
